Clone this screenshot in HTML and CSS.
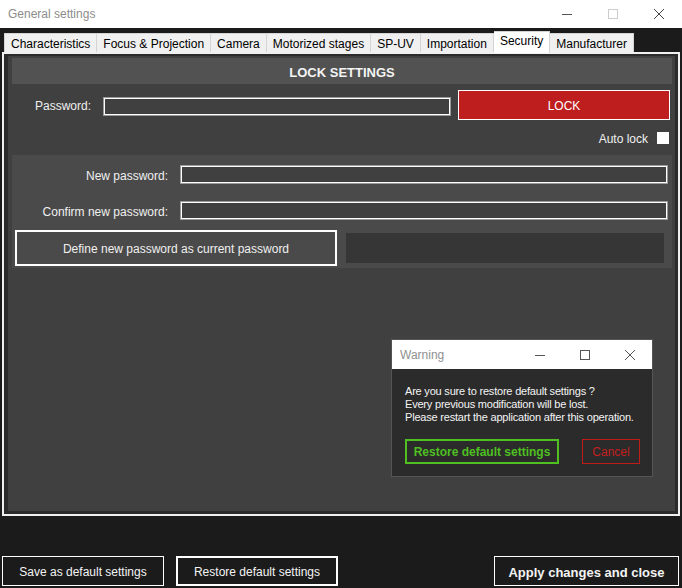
FILE: index.html
```html
<!DOCTYPE html>
<html>
<head>
<meta charset="utf-8">
<link rel="stylesheet" href="styles.css">
</head>
<body>
<div class="window">
  <div class="titlebar">
    <span class="title">General settings</span>
    <div class="controls">
      <span class="ctl"><svg width="12" height="12" viewBox="0 0 12 12"><line x1="1" y1="6.5" x2="11" y2="6.5" stroke="#555" stroke-width="1"/></svg></span>
      <span class="ctl"><svg width="12" height="12" viewBox="0 0 12 12"><rect x="1.5" y="1.5" width="9" height="9" fill="none" stroke="#ccc" stroke-width="1"/></svg></span>
      <span class="ctl"><svg width="12" height="12" viewBox="0 0 12 12"><path d="M1 1L11 11M11 1L1 11" stroke="#444" stroke-width="1"/></svg></span>
    </div>
  </div>
  <div class="main">
    <div class="tabs">
      <div class="tab">Characteristics</div>
      <div class="tab">Focus &amp; Projection</div>
      <div class="tab">Camera</div>
      <div class="tab">Motorized stages</div>
      <div class="tab">SP-UV</div>
      <div class="tab">Importation</div>
      <div class="tab active">Security</div>
      <div class="tab">Manufacturer</div>
    </div>
    <div class="panel">
      <div class="content">
        <div class="header">LOCK SETTINGS</div>
        <div class="lock-section">
          <div class="row pw-row">
            <label class="lbl lbl-pw">Password:</label>
            <div class="input pw-input"></div>
            <button class="lock-btn">LOCK</button>
          </div>
          <div class="auto-row">
            <span>Auto lock</span>
            <span class="checkbox"></span>
          </div>
        </div>
        <div class="new-section">
          <div class="row np-row">
            <label class="lbl lbl-np">New password:</label>
            <div class="input np-input"></div>
          </div>
          <div class="row np-row second">
            <label class="lbl lbl-np">Confirm new password:</label>
            <div class="input np-input"></div>
          </div>
          <div class="define-row">
            <button class="define-btn">Define new password as current password</button>
            <div class="status-box"></div>
          </div>
        </div>
      </div>
      <div class="dialog">
        <div class="dlg-title">
          <span class="dlg-name">Warning</span>
          <div class="dlg-controls">
            <span class="dctl"><svg width="12" height="12" viewBox="0 0 12 12"><line x1="1" y1="6.5" x2="11" y2="6.5" stroke="#555" stroke-width="1"/></svg></span>
            <span class="dctl"><svg width="12" height="12" viewBox="0 0 12 12"><rect x="1.5" y="1.5" width="9" height="9" fill="none" stroke="#555" stroke-width="1"/></svg></span>
            <span class="dctl"><svg width="12" height="12" viewBox="0 0 12 12"><path d="M1 1L11 11M11 1L1 11" stroke="#555" stroke-width="1"/></svg></span>
          </div>
        </div>
        <div class="dlg-body">
          <p class="dlg-text">Are you sure to restore default settings ?<br>Every previous modification will be lost.<br>Please restart the application after this operation.</p>
          <div class="dlg-buttons">
            <button class="btn-green">Restore default settings</button>
            <button class="btn-red">Cancel</button>
          </div>
        </div>
      </div>
    </div>
    <div class="bottom">
      <button class="bbtn save">Save as default settings</button>
      <button class="bbtn restore">Restore default settings</button>
      <span class="spacer"></span>
      <button class="bbtn apply">Apply changes and close</button>
    </div>
  </div>
</div>
</body>
</html>
```
FILE: styles.css
```css
* { box-sizing: border-box; }
html, body { margin: 0; padding: 0; }
body {
  width: 682px;
  height: 588px;
  overflow: hidden;
  font-family: "Liberation Sans", Arial, sans-serif;
  font-size: 12px;
  background: #1b1b1b;
}
.window { display: flex; flex-direction: column; height: 588px; }
.titlebar {
  height: 28px;
  background: #fff;
  display: flex;
  align-items: center;
  padding-left: 8px;
}
.title { color: #8c8c8c; font-size: 12px; }
.controls { margin-left: auto; display: flex; }
.ctl { width: 46px; height: 28px; display: flex; align-items: center; justify-content: center; }
.main { flex: 1; display: flex; flex-direction: column; background: #1b1b1b; }
.tabs {
  display: flex;
  align-items: flex-end;
  padding-left: 4px;
  margin-top: 5px;
  height: 19px;
}
.tab {
  height: 19px;
  background: #f0f0f0;
  border: 1px solid #d4d4d4;
  border-bottom: none;
  border-left: none;
  padding: 3px 6px 0 6px;
  color: #000;
  font-size: 12px;
  line-height: 15px;
  white-space: nowrap;
}
.tab:first-child { border-left: 1px solid #d4d4d4; }
.tab.active {
  background: #fff;
  height: 22px;
  margin-bottom: -1px;
  padding-top: 2px;
  position: relative;
  z-index: 2;
}
.panel {
  position: relative;
  margin: 0 2px;
  height: 464px;
  border: 2px solid #f0f0f0;
  background: #2b2b2b;
  padding: 2px 3px 3px 4px;
  display: flex;
}
.content {
  flex: 1;
  background: #404040;
  padding: 2px 3px 0 4px;
  color: #f0f0f0;
}
.header {
  height: 26px;
  background: #525252;
  color: #f4f4f4;
  font-weight: bold;
  font-size: 13px;
  display: flex;
  align-items: center;
  justify-content: center;
  padding-top: 2px;
}
.lock-section { height: 71px; padding-top: 6px; }
.row { display: flex; align-items: center; }
.pw-row { height: 30px; }
.lbl { text-align: right; color: #f0f0f0; white-space: nowrap; padding-top: 2px; }
.lbl-pw { width: 79px; margin-right: 12px; }
.input {
  height: 19px;
  background: #404040;
  border: 1px solid #9a9a9a;
  box-shadow: inset 0 0 0 1px #fff;
}
.pw-input { width: 348px; margin-top: 2px; }
.lock-btn {
  margin-left: 7px;
  width: 212px;
  height: 30px;
  background: #be1e1e;
  border: 1px solid #fff;
  color: #fff;
  font-family: "Liberation Sans", Arial, sans-serif;
  font-size: 12px;
  padding: 2px 0 0 0;
}
.auto-row {
  display: flex;
  justify-content: flex-end;
  align-items: center;
  margin-top: 12px;
  padding-right: 3px;
  height: 12px;
}
.auto-row span:first-child { padding-top: 2px; }
.checkbox {
  width: 12px;
  height: 12px;
  background: #fff;
  margin-left: 9px;
}
.new-section {
  background: #4a4a4a;
  height: 113px;
  padding: 10px 4px 2px 0;
}
.lbl-np { width: 156px; margin-right: 12px; }
.np-row { height: 19px; }
.np-row.second { margin-top: 17px; }
.np-input { flex: 1; }
.define-row {
  display: flex;
  align-items: center;
  margin-top: 10px;
  padding-left: 3px;
}
.define-btn {
  width: 322px;
  height: 36px;
  background: #4a4a4a;
  border: 2px solid #fff;
  color: #f0f0f0;
  font-family: "Liberation Sans", Arial, sans-serif;
  font-size: 12px;
  padding: 2px 0 0 0;
}
.status-box {
  margin-left: 9px;
  width: 318px;
  height: 30px;
  background: #363636;
}
.dialog {
  position: absolute;
  left: 387px;
  top: 285px;
  width: 262px;
  height: 138px;
  background: #2b2b2b;
  border: 1px solid #555;
  display: flex;
  flex-direction: column;
}
.dlg-title {
  height: 29px;
  background: #fff;
  display: flex;
  align-items: center;
  padding-left: 8px;
}
.dlg-name { color: #909090; font-size: 12px; }
.dlg-controls { margin-left: auto; display: flex; padding-right: 16px; }
.dctl { width: 45px; height: 29px; display: flex; align-items: center; justify-content: flex-end; }
.dlg-body { padding: 16px 0 0 13px; }
.dlg-text {
  margin: 0;
  color: #f4f4f4;
  font-size: 11px;
  letter-spacing: -0.2px;
  line-height: 13px;
}
.dlg-buttons { display: flex; margin-top: 15px; }
.btn-green {
  width: 154px;
  height: 25px;
  background: #2b2b2b;
  border: 2px solid #4fbf22;
  color: #4fbf22;
  font-family: "Liberation Sans", Arial, sans-serif;
  font-size: 12px;
  font-weight: bold;
  padding: 1px 0 0 0;
}
.btn-red {
  margin-left: 23px;
  width: 58px;
  height: 25px;
  background: #2b2b2b;
  border: 1px solid #c01c1c;
  color: #c42020;
  font-family: "Liberation Sans", Arial, sans-serif;
  font-size: 12px;
  padding: 1px 0 0 0;
}
.bottom {
  display: flex;
  margin-top: 40px;
  padding: 0 3px 0 2px;
}
.bbtn {
  height: 30px;
  background: #1b1b1b;
  color: #f4f4f4;
  border: 1px solid #fff;
  font-family: "Liberation Sans", Arial, sans-serif;
  font-size: 12px;
  padding: 2px 0 0 0;
}
.save { width: 162px; }
.restore { width: 162px; margin-left: 12px; border-width: 2px; }
.spacer { flex: 1; }
.apply { width: 185px; font-weight: bold; font-size: 13px; }
```
